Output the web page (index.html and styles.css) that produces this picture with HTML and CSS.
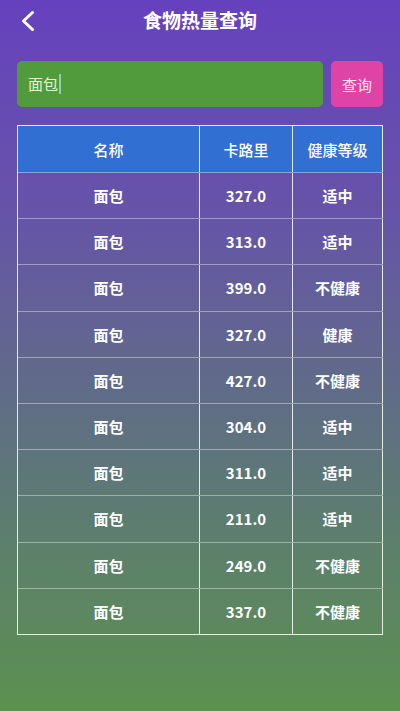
FILE: index.html
```html
<!DOCTYPE html>
<html lang="zh">
<head>
<meta charset="utf-8">
<link rel="stylesheet" href="styles.css">
</head>
<body>
<div class="page">
  <header class="topbar">
    <svg class="back" width="16" height="24" viewBox="0 0 16 24"><path d="M12.5 3.5 L3.5 12 L12.5 20.5" fill="none" stroke="#fff" stroke-width="3" stroke-linecap="round" stroke-linejoin="round"/></svg>
    <h1 class="title">食物热量查询</h1>
  </header>
  <div class="search">
    <div class="input"><span class="value">面包</span><span class="caret"></span></div>
    <button class="btn">查询</button>
  </div>
  <table class="grid">
    <thead>
      <tr><th class="c1">名称</th><th class="c2">卡路里</th><th class="c3">健康等级</th></tr>
    </thead>
    <tbody>
      <tr><td>面包</td><td>327.0</td><td>适中</td></tr>
      <tr><td>面包</td><td>313.0</td><td>适中</td></tr>
      <tr><td>面包</td><td>399.0</td><td>不健康</td></tr>
      <tr><td>面包</td><td>327.0</td><td>健康</td></tr>
      <tr><td>面包</td><td>427.0</td><td>不健康</td></tr>
      <tr><td>面包</td><td>304.0</td><td>适中</td></tr>
      <tr><td>面包</td><td>311.0</td><td>适中</td></tr>
      <tr><td>面包</td><td>211.0</td><td>适中</td></tr>
      <tr><td>面包</td><td>249.0</td><td>不健康</td></tr>
      <tr><td>面包</td><td>337.0</td><td>不健康</td></tr>
    </tbody>
  </table>
</div>
</body>
</html>
```
FILE: styles.css
```css
html, body {
  margin: 0;
  padding: 0;
}
body {
  width: 400px;
  height: 711px;
  overflow: hidden;
  background: linear-gradient(180deg, #6641be 0%, #6654a8 30%, #5d7a74 70%, #5c9150 100%);
  font-family: "Noto Sans CJK SC", "Noto Sans", sans-serif;
  color: #fff;
}
.page {
  padding: 0 17px;
}
.topbar {
  position: relative;
  height: 40px;
  display: flex;
  align-items: center;
  justify-content: center;
}
.back {
  position: absolute;
  left: 3px;
  top: 9px;
}
.title {
  margin: 0;
  font-size: 19px;
  font-weight: 700;
  line-height: 40px;
  letter-spacing: 0;
}
.search {
  margin-top: 21px;
  display: flex;
  gap: 8px;
  height: 46px;
}
.input {
  flex: 1;
  background: #519b3c;
  border-radius: 5px;
  display: flex;
  align-items: center;
  padding-left: 11px;
}
.value {
  font-size: 15px;
  color: #e4f6d4;
  line-height: 20px;
}
.caret {
  width: 1.5px;
  height: 20px;
  background: #8fd0a8;
  margin-left: 1px;
}
.btn {
  width: 52px;
  border: none;
  border-radius: 5px;
  background: #e043a6;
  color: #fde6f2;
  font-family: inherit;
  font-size: 15px;
  padding: 0;
}
.grid {
  margin-top: 18px;
  width: 366px;
  border-collapse: collapse;
  border: 1px solid #e4f0dc;
  table-layout: fixed;
}
.grid th, .grid td {
  text-align: center;
  font-size: 15px;
  font-weight: 700;
  padding: 0;
  border-left: 1px solid rgba(255, 255, 255, 0.85);
  border-bottom: 1px solid rgba(255, 255, 255, 0.4);
}
.grid th {
  height: 46px;
  background: #3170d2;
  font-weight: 500;
}
.grid td {
  height: 45.2px;
}
.grid tbody tr:last-child td {
  border-bottom: 1px solid #e4f0dc;
}
.c1 { width: 181px; }
.c2 { width: 92px; }
.c3 { width: auto; }
```
